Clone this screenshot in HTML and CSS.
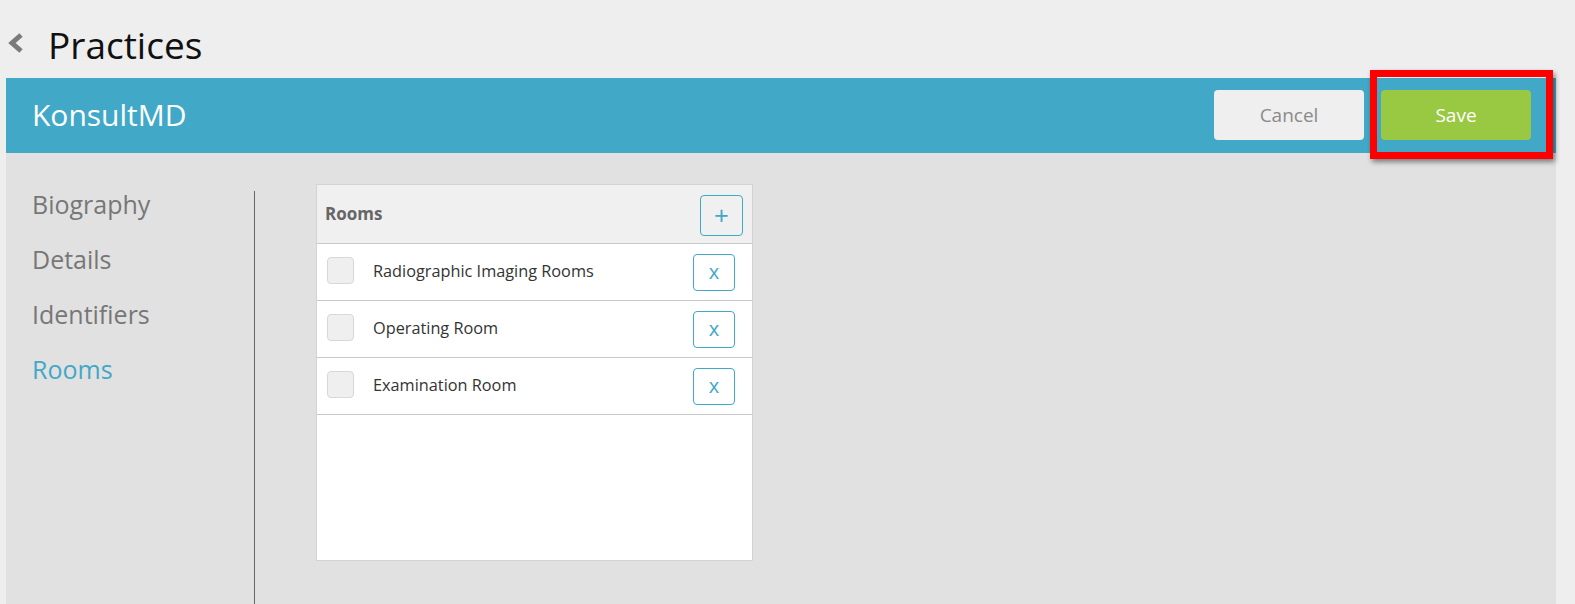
FILE: index.html
```html
<!DOCTYPE html>
<html>
<head>
<meta charset="utf-8">
<link rel="stylesheet" href="styles.css">
</head>
<body>
<div class="page">
  <div class="topbar">
    <svg class="back" width="18" height="22" viewBox="0 0 18 22"><path d="M15 3 L6 11 L15 19" fill="none" stroke="#7a7a7a" stroke-width="5"/></svg>
    <h1 class="title">Practices</h1>
  </div>
  <div class="panel-header">
    <div class="practice-name">KonsultMD</div>
    <div class="actions">
      <button class="btn btn-cancel">Cancel</button>
      <div class="save-wrap">
        <button class="btn btn-save">Save</button>
        <div class="highlight"></div>
      </div>
    </div>
  </div>
  <div class="panel-body">
    <nav class="sidenav">
      <a class="nav-item">Biography</a>
      <a class="nav-item">Details</a>
      <a class="nav-item">Identifiers</a>
      <a class="nav-item active">Rooms</a>
    </nav>
    <div class="content">
      <div class="card">
        <div class="card-head">
          <span class="card-title">Rooms</span>
          <button class="icon-btn add">+</button>
        </div>
        <div class="row">
          <span class="check"></span>
          <span class="row-label">Radiographic Imaging Rooms</span>
          <button class="icon-btn del">x</button>
        </div>
        <div class="row">
          <span class="check"></span>
          <span class="row-label">Operating Room</span>
          <button class="icon-btn del">x</button>
        </div>
        <div class="row">
          <span class="check"></span>
          <span class="row-label">Examination Room</span>
          <button class="icon-btn del">x</button>
        </div>
      </div>
    </div>
  </div>
</div>
</body>
</html>
```
FILE: styles.css
```css
html, body {
  margin: 0;
  padding: 0;
  height: 100%;
  overflow: hidden;
}
body {
  background: #eeeeee;
  font-family: "Open Sans", "Noto Sans", sans-serif;
}
.page {
  padding: 0 19px 0 6px;
  display: flex;
  flex-direction: column;
  height: 604px;
}
.topbar {
  height: 78px;
  display: flex;
  align-items: center;
  padding-top: 10px;
  box-sizing: border-box;
}
.back {
  margin-left: 0;
  margin-right: 24px;
  margin-top: -2px;
}
.title {
  margin: 0;
  font-weight: 400;
  font-size: 37px;
  color: #111;
  line-height: 1;
}
.panel-header {
  height: 75px;
  background: #41a8c8;
  display: flex;
  align-items: center;
  justify-content: space-between;
  padding: 0 25px 0 26px;
}
.practice-name {
  color: #fff;
  font-size: 30px;
  margin-top: -2px;
}
.actions {
  display: flex;
  gap: 17px;
  margin-top: -2px;
}
.btn {
  width: 150px;
  height: 50px;
  border: none;
  border-radius: 4px;
  font-family: "Open Sans", "Noto Sans", sans-serif;
  font-size: 19px;
}
.btn-cancel {
  background: #efefef;
  color: #8a8a8a;
}
.btn-save {
  background: #99c843;
  color: #fff;
}
.save-wrap {
  position: relative;
}
.highlight {
  position: absolute;
  left: -11px;
  top: -20px;
  right: -22px;
  bottom: -19px;
  border: 7px solid #ff0000;
  box-shadow: 2px 3px 5px rgba(0,0,0,0.45);
  pointer-events: none;
}
.panel-body {
  flex: 1;
  background: #e1e1e1;
  display: flex;
}
.sidenav {
  width: 222px;
  padding-left: 26px;
  padding-top: 33px;
  display: flex;
  flex-direction: column;
  gap: 19px;
}
.nav-item {
  font-size: 25px;
  color: #777;
  line-height: 36px;
}
.nav-item.active {
  color: #41a8c8;
}
.content {
  margin-top: 38px;
  border-left: 1px solid #666;
  padding-left: 61px;
}
.card {
  margin-top: -7px;
  width: 437px;
  height: 377px;
  background: #fff;
  border: 1px solid #d3d3d3;
  box-sizing: border-box;
}
.card-head {
  height: 58px;
  background: #f0f0f0;
  border-bottom: 1px solid #c8c8c8;
  display: flex;
  align-items: center;
  justify-content: space-between;
  padding: 0 9px 0 8px;
}
.card-title {
  font-weight: 700;
  font-size: 17px;
  color: #666;
  margin-top: -2px;
}
.icon-btn {
  background: #fff;
  border: 1px solid #41a8c8;
  border-radius: 4px;
  color: #41a8c8;
  font-family: "Open Sans", "Noto Sans", sans-serif;
  padding: 0;
}
.add {
  width: 43px;
  height: 41px;
  font-size: 26px;
  line-height: 1;
  background: transparent;
  margin-top: 2px;
}
.row {
  height: 56px;
  border-bottom: 1px solid #c8c8c8;
  display: flex;
  align-items: center;
  padding: 0 17px 0 10px;
}
.check {
  width: 25px;
  height: 25px;
  background: #efefef;
  border: 1px solid #d8d8d8;
  border-radius: 4px;
  margin-top: -4px;
}
.row-label {
  flex: 1;
  margin-left: 19px;
  font-size: 16.3px;
  color: #333;
  margin-top: -2px;
}
.del {
  width: 42px;
  height: 37px;
  font-size: 20px;
  line-height: 1;
}
```
